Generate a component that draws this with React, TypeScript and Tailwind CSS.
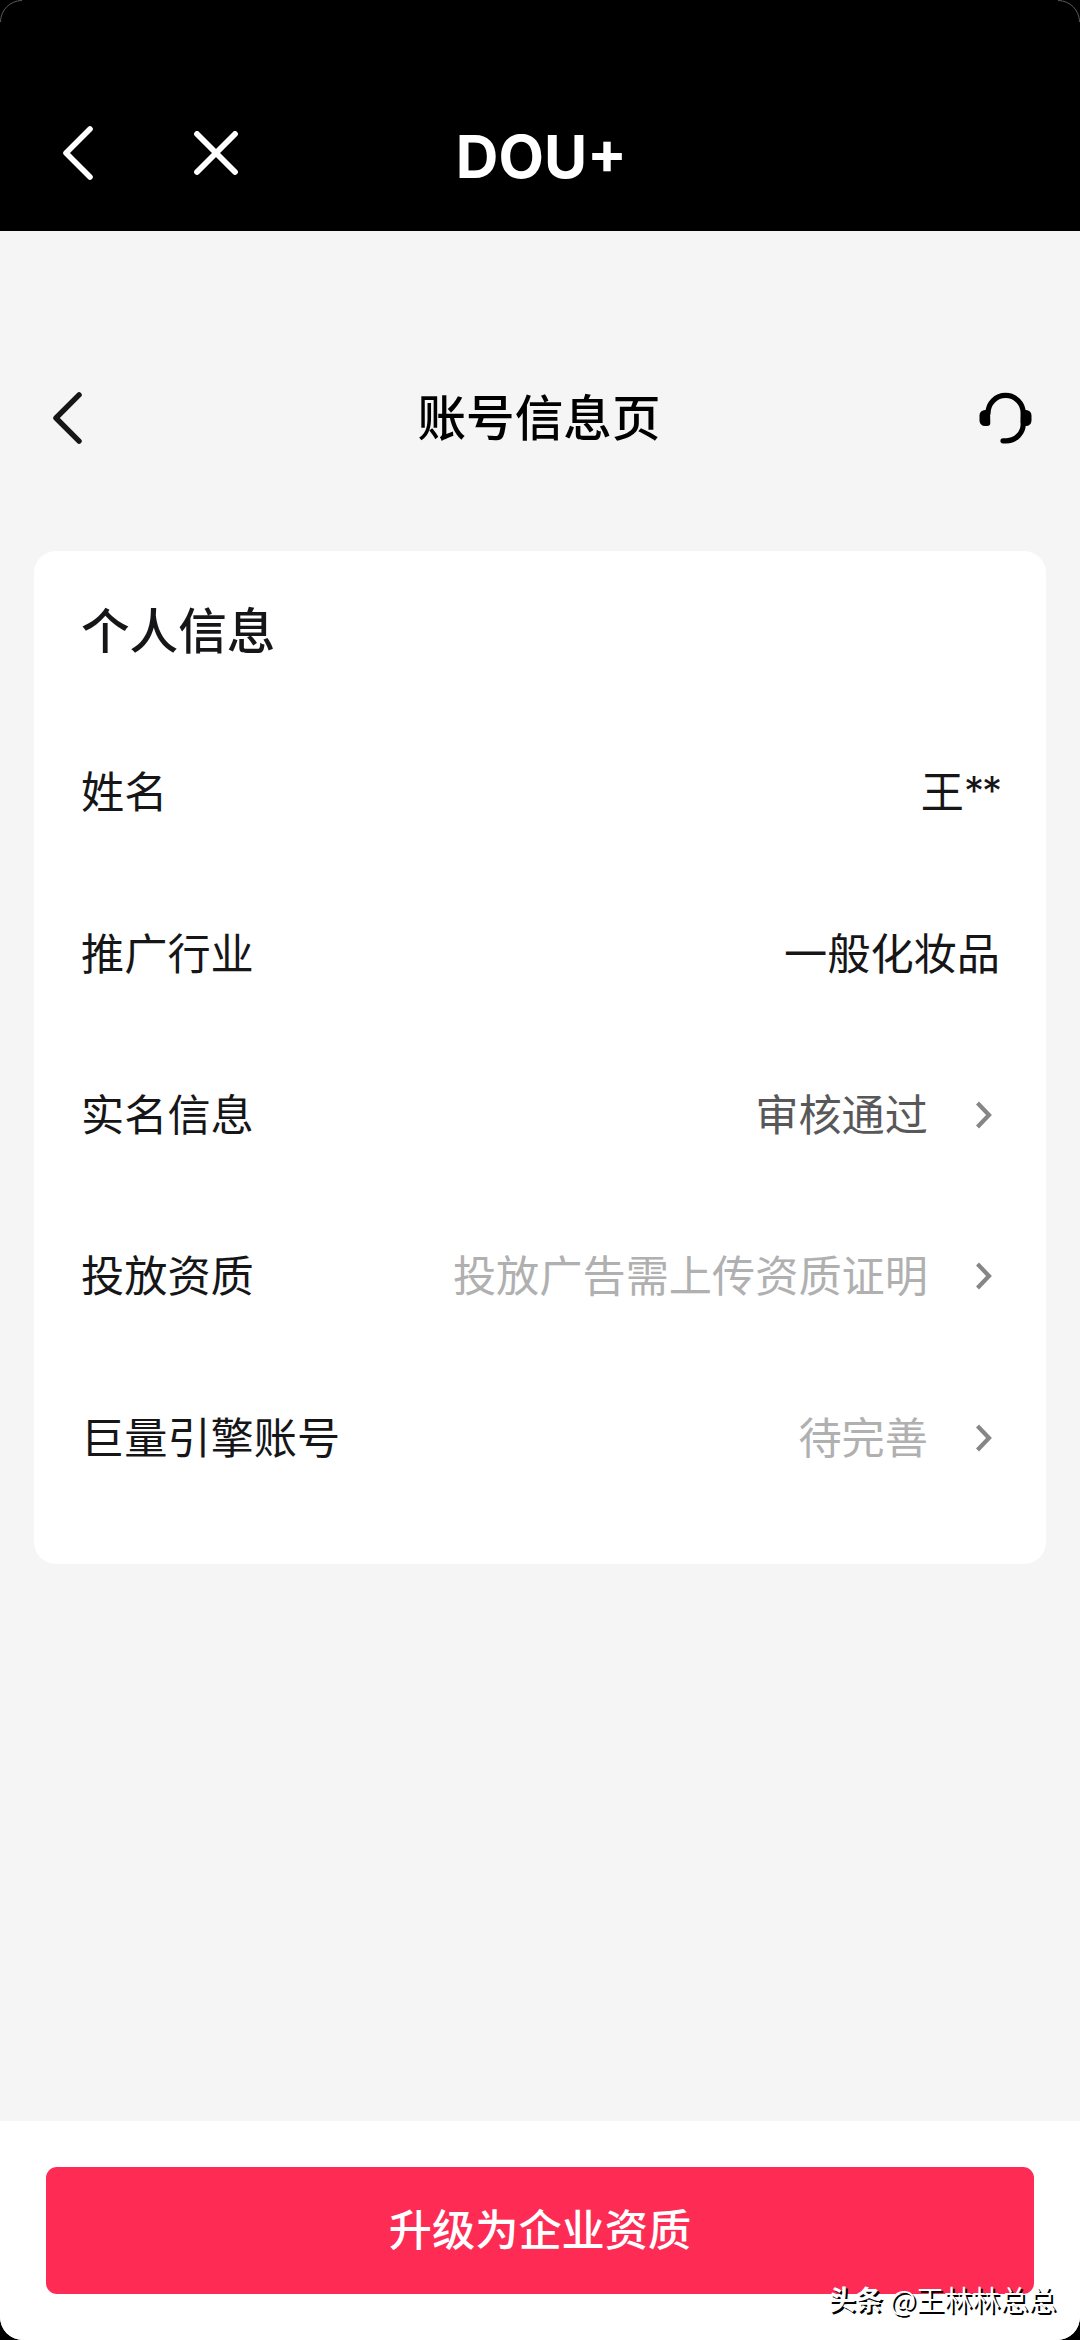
import clsx from "clsx"

type Row = {
    label: string
    value: string
    mask?: string
    tone: string
    link?: boolean
}

const rows: Row[] = [
    { label: "姓名", value: "王", mask: "**", tone: "text-[#161618]" },
    { label: "推广行业", value: "一般化妆品", tone: "text-[#161618]" },
    { label: "实名信息", value: "审核通过", tone: "text-[#58585a]", link: true },
    { label: "投放资质", value: "投放广告需上传资质证明", tone: "text-[#b0b0b1]", link: true },
    { label: "巨量引擎账号", value: "待完善", tone: "text-[#b0b0b1]", link: true },
]

function BackIcon ({ className }: { className?: string }) {
    return (
        <svg className={ className } viewBox="0 0 30 54" fill="none" stroke="currentColor" strokeWidth="5.6" strokeLinecap="round" strokeLinejoin="round">
            <path d="M27 3 L3 27 L27 51" />
        </svg>
    )
}

function CloseIcon ({ className }: { className?: string }) {
    return (
        <svg className={ className } viewBox="0 0 44 44" fill="none" stroke="currentColor" strokeWidth="5.8" strokeLinecap="round">
            <path d="M3 3 L41 41 M41 3 L3 41" />
        </svg>
    )
}

function HeadsetIcon ({ className }: { className?: string }) {
    return (
        <svg className={ className } viewBox="0 0 53 52" fill="none">
            <path
                d="M9 21 A17.6 17.6 0 0 1 44.2 21 V31 A17 17 0 0 1 27 48.8 H24"
                stroke="currentColor"
                strokeWidth="5.2"
                strokeLinecap="round"
            />
            <path d="M11 18 H6 A5.5 5.5 0 0 0 0.5 23.5 V28.5 A5.5 5.5 0 0 0 6 34 H8 A3.3 3.3 0 0 0 11.3 30.7 Z" fill="currentColor" />
            <path d="M42 18 H47 A5.5 5.5 0 0 1 52.5 23.5 V28.5 A5.5 5.5 0 0 1 47 34 H44 L41.7 31 Z" fill="currentColor" />
        </svg>
    )
}

function ArrowIcon () {
    return (
        <svg className="w-4 h-[28px] ml-[48px] mr-[8px] mb-[2px] text-[#868687]" viewBox="0 0 16 28" fill="none" stroke="currentColor" strokeWidth="4.2">
            <path d="M1.5 2 L13 14 L1.5 26" />
        </svg>
    )
}

// Thin highlight along the rounded screen corner
function CornerArc ({ className }: { className?: string }) {
    return (
        <svg className={ className } viewBox="0 0 23 23" fill="none" stroke="#5a5a5a" strokeWidth="1">
            <path d="M0.5 22 A21.5 21.5 0 0 1 22 0.5" />
        </svg>
    )
}

export default function App () {
    return (
        <div className="w-[1080px] h-[2340px] bg-black">
            <div className="relative flex flex-col w-full h-full overflow-hidden rounded-b-[23px] bg-[#f5f5f5] font-['Noto_Sans_CJK_SC',sans-serif] text-[#161618]">
                <CornerArc className="absolute top-0 left-0 w-[23px] h-[23px]" />
                <CornerArc className="absolute top-0 right-0 w-[23px] h-[23px] -scale-x-100" />

                {/* Container bar */ }
                <header className="h-[231px] shrink-0 bg-black text-white">
                    <div className="grid grid-cols-[1fr_auto_1fr] items-center h-[86px] mt-[110px] pl-[63px] pr-[60px]">
                        <div className="flex items-center gap-[101px]">
                            <BackIcon className="w-[30px] h-[54px]" />
                            <CloseIcon className="w-[44px] h-[44px]" />
                        </div>
                        <h1 className="pt-1.5 font-['Inter',sans-serif] text-[59px] leading-none font-bold">DOU+</h1>
                    </div>
                </header>

                {/* Page title */ }
                <div className="grid grid-cols-[1fr_auto_1fr] items-center h-[120px] mt-[127px] pl-[53px] pr-[55px]">
                    <BackIcon className="w-[29px] h-[52px]" />
                    <h2 className="pb-[6px] text-[48.6px] leading-none font-medium text-black">账号信息页</h2>
                    <HeadsetIcon className="w-[53px] h-[52px] -mr-[7px] justify-self-end text-black" />
                </div>

                {/* Personal info */ }
                <section className="mt-[73px] mx-[34px] h-[1013px] rounded-[22px] bg-white pl-[47px] pr-[46px]">
                    <h3 className="flex items-center h-[161.4px] pb-[6px] text-[48.6px] font-medium">个人信息</h3>
                    { rows.map(row => (
                        <div key={ row.label } className="flex items-center h-[161.4px] text-[43.2px]">
                            <span className="pb-[7px]">{ row.label }</span>
                            <span className={ clsx("flex ml-auto pb-[7px]", row.tone) }>
                                { row.value }
                                { row.mask && <span className="mt-[4px] font-['Inter',sans-serif] text-[40px] leading-[60px] tracking-[-2px]">{ row.mask }</span> }
                            </span>
                            { row.link && <ArrowIcon /> }
                        </div>
                    )) }
                </section>

                {/* Bottom action */ }
                <footer className="mt-auto h-[219px] bg-white px-[46px] pt-[46px]">
                    <button className="flex items-center justify-center w-full h-[127px] pb-[6px] rounded-[11px] bg-[#fe2c55] text-[43.2px] font-medium text-white">
                        升级为企业资质
                    </button>
                </footer>

                {/* Watermark */ }
                <div className="absolute right-[24px] bottom-[21px] flex items-center gap-[7px] whitespace-nowrap text-[28px] leading-[40px] text-white [text-shadow:2px_2px_0_#000]">
                    <span className="font-bold text-[27px]">头条</span>
                    <span>@王林林总总</span>
                </div>
            </div>
        </div>
    )
}
